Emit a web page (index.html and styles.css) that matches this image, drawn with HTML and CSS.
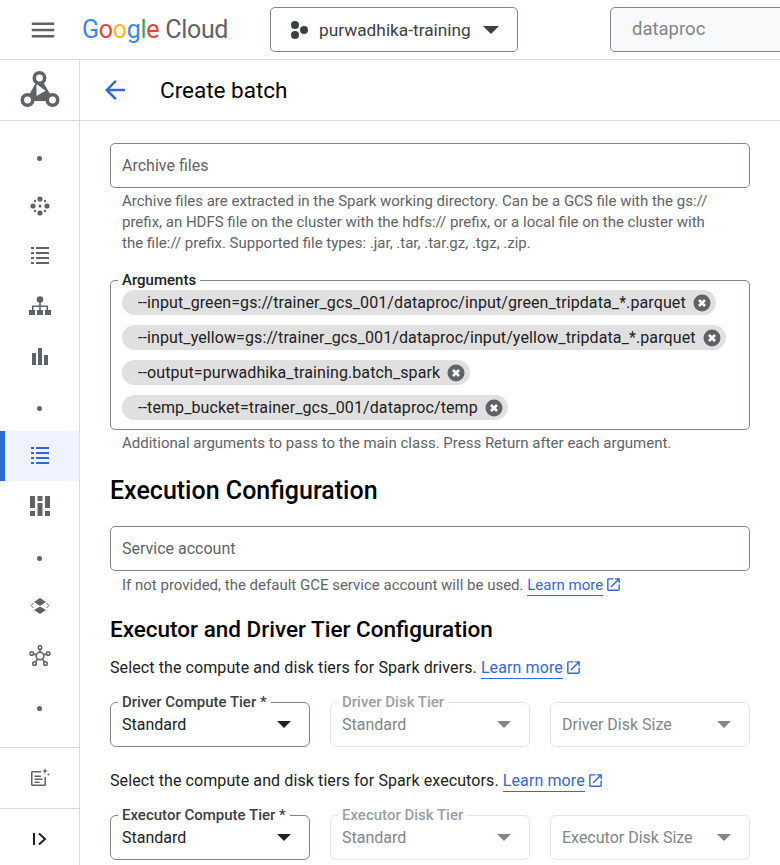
FILE: index.html
```html
<!DOCTYPE html>
<html lang="en">
<head>
  <meta charset="UTF-8">
  <title>Create batch</title>
  <link rel="stylesheet" href="styles.css">
</head>
<body>
  <!-- Shared icons -->
  <svg class="defs" width="0" height="0">
    <symbol id="i-list" viewBox="0 0 18 18">
      <path d="M0 0h3v2H0zM5 0h13v2H5zM0 5h3v2H0zM5 5h13v2H5zM0 10h3v2H0zM5 10h13v2H5zM0 15h3v2H0zM5 15h13v2H5z"/>
    </symbol>
    <symbol id="i-clear" viewBox="0 0 18 18">
      <circle cx="9" cy="9" r="8.5"/>
      <path d="M6 6l6 6M12 6l-6 6" stroke="#fff" stroke-width="2.6" fill="none"/>
    </symbol>
    <symbol id="i-open" viewBox="0 0 24 24">
      <path d="M19 19H5V5h7V3H5c-1.11 0-2 .9-2 2v14c0 1.1.89 2 2 2h14c1.1 0 2-.9 2-2v-7h-2v7zM14 3v2h3.59l-9.83 9.83 1.41 1.41L19 6.41V10h2V3h-7z"/>
    </symbol>
    <symbol id="i-caret" viewBox="0 0 16 8">
      <path d="M0 0h16L8 8z"/>
    </symbol>
  </svg>

  <!-- Top bar -->
  <header class="topbar">
    <button class="menu-btn" aria-label="Menu">
      <svg width="30" height="30" viewBox="0 0 24 24"><path d="M3 18h18v-2H3v2zm0-5h18v-2H3v2zm0-7v2h18V6H3z"/></svg>
    </button>
    <div class="brand">
      <span class="brand-google"><span class="g-blue">G</span><span class="g-red">o</span><span class="g-yellow">o</span><span class="g-blue">g</span><span class="g-green">l</span><span class="g-red">e</span></span>
      <span class="brand-cloud">Cloud</span>
    </div>
    <button class="project-btn">
      <svg width="20" height="20" viewBox="0 0 20 20"><circle cx="6" cy="5" r="4"/><circle cx="6" cy="15" r="4"/><circle cx="15" cy="10" r="4"/></svg>
      <span class="project-name">purwadhika-training</span>
      <svg class="caret-lg" width="16" height="8"><use href="#i-caret"/></svg>
    </button>
    <div class="search">dataproc</div>
  </header>

  <div class="layout">
    <!-- Product rail -->
    <nav class="rail">
      <div class="rail-logo">
        <svg width="42" height="38" viewBox="0 0 42 38">
          <path d="M20.500 7L8.500 29h25z" fill="#5f6368" stroke="#5f6368" stroke-width="2"/>
          <path d="M17.500 13v12l9-5.300z" fill="#fff"/>
          <g fill="#fff" stroke="#5f6368" stroke-width="3.600">
            <circle cx="20.500" cy="7" r="5.200"/>
            <circle cx="8.500" cy="29" r="5.200"/>
            <circle cx="33.500" cy="29" r="5.200"/>
          </g>
        </svg>
      </div>
      <div class="rail-items">
        <a class="rail-item"><span class="dot"></span></a>
        <a class="rail-item">
          <svg width="22" height="22" viewBox="0 0 22 22"><circle cx="11" cy="4" r="2.600"/><circle cx="11" cy="18" r="2.600"/><circle cx="4" cy="11" r="2.600"/><circle cx="18" cy="11" r="2.600"/><circle cx="11" cy="11" r="1.500"/><circle cx="6" cy="6" r="1.200"/><circle cx="16" cy="6" r="1.200"/><circle cx="6" cy="16" r="1.200"/><circle cx="16" cy="16" r="1.200"/></svg>
        </a>
        <a class="rail-item"><svg width="18" height="18"><use href="#i-list"/></svg></a>
        <a class="rail-item">
          <svg width="22" height="22" viewBox="0 0 22 22"><circle cx="11" cy="4.500" r="3.300"/><path d="M10.200 7h1.600v3.500H19V15h-1.500v-3H11.800v3h-1.600v-3H4.500v3H3v-4.500h7.200z"/><path d="M0 15h6v5H0zM8 15h6v5H8zM16 15h6v5h-6z"/></svg>
        </a>
        <a class="rail-item">
          <svg width="18" height="18" viewBox="0 0 18 18"><path d="M1 6h4v12H1zM7 1h4v17H7zM13 8h4v10h-4z"/></svg>
        </a>
        <a class="rail-item"><span class="dot"></span></a>
        <a class="rail-item is-active"><svg width="18" height="18"><use href="#i-list"/></svg></a>
        <a class="rail-item">
          <svg width="20" height="20" viewBox="0 0 20 20"><path d="M0 0h5v12H0zM7.500 0h5v5h-5zM15 0h5v12h-5zM7.500 7h5v13h-5zM0 15h5v5H0zM15 15h5v5h-5z"/></svg>
        </a>
        <a class="rail-item"><span class="dot"></span></a>
        <a class="rail-item">
          <svg width="20" height="18" viewBox="0 0 20 18"><path d="M10 1l6 4-6 4-6-4zM10 9.500l6 3.500-6 4-6-4z"/><path d="M3.500 6L1 8.500 3.500 11M16.500 6L19 8.500 16.500 11" fill="none" stroke="#5f6368" stroke-width="1"/></svg>
        </a>
        <a class="rail-item">
          <svg width="22" height="22" viewBox="0 0 22 22" fill="none" stroke="#5f6368" stroke-width="1.500"><circle cx="11" cy="11" r="3.800"/><circle cx="11" cy="2.500" r="1.800"/><circle cx="2.800" cy="8.500" r="1.800"/><circle cx="19.200" cy="8.500" r="1.800"/><circle cx="5.500" cy="18.500" r="1.800"/><circle cx="16.500" cy="18.500" r="1.800"/><path d="M11 4.300v3M4.500 9l3 1M17.500 9l-3 1M6.500 17l2.200-3M15.500 17l-2.200-3"/></svg>
        </a>
        <a class="rail-item"><span class="dot"></span></a>
      </div>
      <div class="rail-foot">
        <svg width="20" height="20" viewBox="0 0 20 20"><path d="M11 3H2.500C1.700 3 1 3.700 1 4.500v12c0 .8.700 1.500 1.500 1.500h12c.8 0 1.500-.7 1.500-1.500V9h-1.500v7.500h-12v-12H11z"/><path d="M4.500 7.500H11V9H4.500zM4.500 10.500h8V12h-8zM4.500 13.500h5V15h-5z"/><path d="M15 0l.8 2.200L18 3l-2.200.8L15 6l-.8-2.200L12 3l2.200-.8zM18.500 5l.4 1.100 1.100.4-1.100.4-.4 1.100-.4-1.100L17 6.500l1.100-.4z"/></svg>
      </div>
      <div class="rail-foot">
        <svg width="16" height="14" viewBox="0 0 16 14" fill="none" stroke="#202124" stroke-width="2"><path d="M2 1v12M7 1.500L13 7l-6 5.500"/></svg>
      </div>
    </nav>

    <div class="content">
      <div class="page-head">
        <svg class="back" width="30" height="30" viewBox="0 0 24 24"><path d="M20 11H7.830l5.590-5.590L12 4l-8 8 8 8 1.410-1.410L7.830 13H20v-2z"/></svg>
        <h1>Create batch</h1>
      </div>

      <form class="form">
        <div class="field">Archive files</div>
        <p class="hint hint-archive">Archive files are extracted in the Spark working directory. Can be a GCS file with the gs:// prefix, an HDFS file on the cluster with the hdfs:// prefix, or a local file on the cluster with the file:// prefix. Supported file types: .jar, .tar, .tar.gz, .tgz, .zip.</p>

        <fieldset class="chips-box">
          <legend>Arguments</legend>
          <span class="chip">--input_green=gs://trainer_gcs_001/dataproc/input/green_tripdata_*.parquet<svg width="18" height="18"><use href="#i-clear"/></svg></span>
          <span class="chip">--input_yellow=gs://trainer_gcs_001/dataproc/input/yellow_tripdata_*.parquet<svg width="18" height="18"><use href="#i-clear"/></svg></span>
          <span class="chip">--output=purwadhika_training.batch_spark<svg width="18" height="18"><use href="#i-clear"/></svg></span>
          <span class="chip">--temp_bucket=trainer_gcs_001/dataproc/temp<svg width="18" height="18"><use href="#i-clear"/></svg></span>
        </fieldset>
        <p class="hint">Additional arguments to pass to the main class. Press Return after each argument.</p>

        <h2>Execution Configuration</h2>
        <div class="field">Service account</div>
        <p class="hint hint-service">If not provided, the default GCE service account will be used. <a class="link">Learn more</a> <svg class="open" width="17" height="17"><use href="#i-open"/></svg></p>

        <h3>Executor and Driver Tier Configuration</h3>
        <p class="lead">Select the compute and disk tiers for Spark drivers. <a class="link">Learn more</a> <svg class="open" width="17" height="17"><use href="#i-open"/></svg></p>
        <div class="tier-row">
          <fieldset class="select">
            <legend>Driver Compute Tier *</legend>
            <span>Standard</span>
            <svg width="14" height="7"><use href="#i-caret"/></svg>
          </fieldset>
          <fieldset class="select is-disabled">
            <legend>Driver Disk Tier</legend>
            <span>Standard</span>
            <svg width="14" height="7"><use href="#i-caret"/></svg>
          </fieldset>
          <div class="select is-disabled no-label">
            <span>Driver Disk Size</span>
            <svg width="14" height="7"><use href="#i-caret"/></svg>
          </div>
        </div>

        <p class="lead lead-2">Select the compute and disk tiers for Spark executors. <a class="link">Learn more</a> <svg class="open" width="17" height="17"><use href="#i-open"/></svg></p>
        <div class="tier-row">
          <fieldset class="select">
            <legend>Executor Compute Tier *</legend>
            <span>Standard</span>
            <svg width="14" height="7"><use href="#i-caret"/></svg>
          </fieldset>
          <fieldset class="select is-disabled">
            <legend>Executor Disk Tier</legend>
            <span>Standard</span>
            <svg width="14" height="7"><use href="#i-caret"/></svg>
          </fieldset>
          <div class="select is-disabled no-label">
            <span>Executor Disk Size</span>
            <svg width="14" height="7"><use href="#i-caret"/></svg>
          </div>
        </div>
      </form>
    </div>
  </div>
</body>
</html>
```

FILE: styles.css
```css
/* Page */
* {
  box-sizing: border-box;
}
html, body {
  height: 100%;
}
body {
  margin: 0;
  background: #fff;
  color: #202124;
  font-family: Roboto, "Liberation Sans", sans-serif;
  font-size: 14px;
  overflow: hidden;
}
.defs {
  position: absolute;
}

/* Top bar */
.topbar {
  display: flex;
  align-items: center;
  height: 60px;
  border-bottom: 1px solid #dadce0;
  overflow: hidden;
}
.menu-btn {
  display: flex;
  flex: none;
  margin-left: 28px;
  padding: 0;
  border: none;
  background: none;
  fill: #5f6368;
}
.brand {
  display: flex;
  flex: none;
  align-items: baseline;
  gap: 6px;
  width: 212px;
  margin-left: 24px;
  font-size: 25px;
  letter-spacing: -0.3px;
}
.brand-cloud { color: #5f6368; }
.g-blue { color: #4285f4; }
.g-red { color: #ea4335; }
.g-yellow { color: #fbbc04; }
.g-green { color: #34a853; }
.project-btn {
  display: flex;
  align-items: center;
  flex: none;
  width: 248px;
  height: 45px;
  margin-left: -24px;
  padding: 0 0 0 18px;
  border: 1px solid #80868b;
  border-radius: 5px;
  background: #fff;
  color: #3c4043;
  fill: #3c4043;
  font: 17.300px Roboto, sans-serif;
}
.project-name {
  margin-left: 10px;
}
.caret-lg {
  margin-left: 12px;
}
.search {
  flex: none;
  width: 300px;
  height: 45px;
  margin-left: 92px;
  padding-left: 21px;
  border: 1px solid #80868b;
  border-radius: 5px;
  background: #f8f9fa;
  color: #80868b;
  font-size: 18.500px;
  line-height: 43px;
}

/* Rail */
.layout {
  display: flex;
  height: 805px;
}
.rail {
  display: flex;
  flex-direction: column;
  flex: none;
  width: 80px;
  border-right: 1px solid #dadce0;
  fill: #5f6368;
}
.rail-logo {
  display: flex;
  align-items: center;
  justify-content: center;
  flex: none;
  height: 61px;
  border-bottom: 1px solid #dadce0;
}
.rail-items {
  flex: none;
  height: 626px;
  padding-top: 10px;
}
.rail-item {
  display: flex;
  align-items: center;
  justify-content: center;
  height: 50px;
}
.rail-item.is-active {
  background: #eef3fd;
  border-left: 5px solid #3367d6;
  padding-right: 5px;
  fill: #3367d6;
}
.dot {
  width: 5px;
  height: 5px;
  margin-top: 4px;
  border-radius: 50%;
  background: #5f6368;
}
.rail-foot {
  display: flex;
  align-items: center;
  justify-content: center;
  flex: none;
  height: 61px;
  border-top: 1px solid #dadce0;
}

/* Main column */
.content {
  flex: 1;
  min-width: 0;
}
.page-head {
  display: flex;
  align-items: center;
  height: 61px;
  padding-bottom: 1px;
  border-bottom: 1px solid #dadce0;
}
.back {
  margin-left: 20px;
  fill: #3367d6;
}
h1 {
  margin: 0 0 0 30px;
  color: #000;
  font-size: 22.500px;
  font-weight: 400;
}
.form {
  padding: 22px 30px 0 30px;
}
.field {
  height: 45px;
  padding-left: 11px;
  border: 1px solid #80868b;
  border-radius: 5px;
  color: #5f6368;
  font-size: 16px;
  line-height: 43px;
}
.hint {
  margin: 3px 0 0;
  padding-left: 12px;
  color: #5f6368;
  font-size: 15px;
  line-height: 21px;
}
.hint-archive {
  width: 610px;
}
.hint-service {
  margin-top: 4px;
}
.link {
  padding-bottom: 1px;
  border-bottom: 1px solid #3367d6;
  color: #3367d6;
}
.open {
  margin-left: -2px;
  vertical-align: -3px;
  fill: #3367d6;
}

/* Chips */
fieldset {
  margin: 0;
  min-width: 0;
}
legend {
  padding: 0 4px;
  line-height: 16px;
  font-size: 15px;
  font-weight: 500;
  white-space: nowrap;
}
.chips-box {
  display: flex;
  flex-direction: column;
  align-items: flex-start;
  gap: 10px;
  height: 158px;
  margin-top: 18px;
  padding: 2px 11px 0;
  border: 1px solid #80868b;
  border-radius: 5px;
}
.chips-box legend {
  margin-left: -4px;
}
.chip {
  display: flex;
  align-items: center;
  gap: 7px;
  height: 25px;
  padding: 0 5px 0 16px;
  border-radius: 13px;
  background: #e0e0e0;
  font-size: 16px;
  letter-spacing: 0.1px;
  white-space: nowrap;
  fill: #5f6368;
}

/* Headings */
h2 {
  margin: 21px 0 0;
  color: #000;
  font-size: 25px;
  font-weight: 500;
  line-height: 32px;
}
h2 + .field {
  margin-top: 19px;
}
h3 {
  margin: 19px 0 0;
  color: #000;
  font-size: 22.500px;
  font-weight: 500;
  line-height: 28px;
}
.lead {
  margin: 15px 0 0;
  font-size: 16px;
  letter-spacing: 0.1px;
  line-height: 20px;
}
.lead-2 {
  margin-top: 24px;
}

/* Tier selects */
.tier-row {
  display: grid;
  grid-template-columns: repeat(3, 200px);
  gap: 20px;
  margin-top: 16px;
}
.select {
  display: flex;
  align-items: center;
  justify-content: space-between;
  height: 53px;
  padding: 0 18px 8px 11px;
  border: 1px solid #80868b;
  border-radius: 6px;
  font-size: 16px;
  fill: #202124;
}
.select legend {
  margin-left: -4px;
  color: #3c4043;
}
.select.is-disabled {
  border-color: #e3e5e8;
  color: #80868b;
  fill: #80868b;
}
.select.is-disabled legend {
  color: #9aa0a6;
}
.no-label {
  height: 45px;
  margin-top: 8px;
  padding-bottom: 0;
}
```
